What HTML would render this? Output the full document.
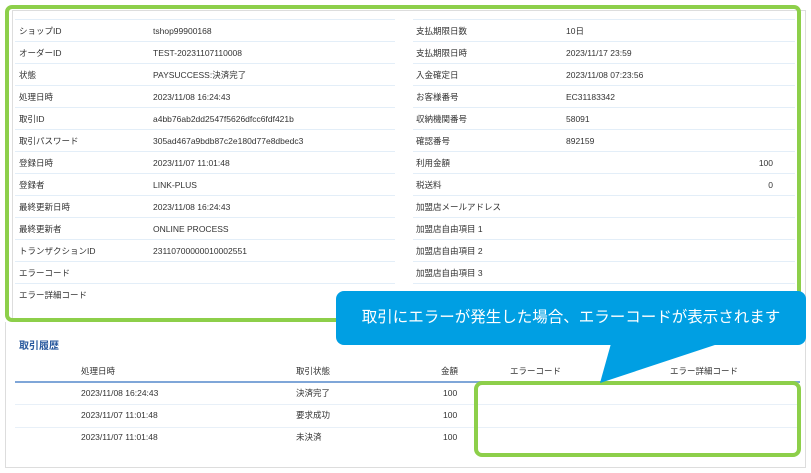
<!DOCTYPE html>
<html><head><meta charset="utf-8"><style>
*{margin:0;padding:0;box-sizing:border-box}
body{width:811px;height:473px;background:#fff;position:relative;overflow:hidden;font-family:"Liberation Sans","Noto Sans CJK JP",sans-serif;font-size:8.5px;line-height:12px;color:#333}
.a{position:absolute;white-space:nowrap}
.l{position:absolute;height:1px;background:#e3eef8}
</style></head><body>
<div class="a" style="left:12px;top:10px;width:794px;height:312px;border:1px solid #ddd;border-bottom:none"></div>
<div class="a" style="left:5px;top:322px;width:801px;height:146px;border:1px solid #ddd;border-top:none"></div>
<div class="l" style="left:15px;top:19px;width:380px"></div>
<div class="l" style="left:413px;top:19px;width:382px"></div>
<div id="rows"></div>
<script>
var L=[["ショップID","tshop99900168"],["オーダーID","TEST-20231107110008"],["状態","PAYSUCCESS:決済完了"],["処理日時","2023/11/08 16:24:43"],["取引ID","a4bb76ab2dd2547f5626dfcc6fdf421b"],["取引パスワード","305ad467a9bdb87c2e180d77e8dbedc3"],["登録日時","2023/11/07 11:01:48"],["登録者","LINK-PLUS"],["最終更新日時","2023/11/08 16:24:43"],["最終更新者","ONLINE PROCESS"],["トランザクションID","23110700000010002551"],["エラーコード",""],["エラー詳細コード",""]];
var R=[["支払期限日数","10日"],["支払期限日時","2023/11/17 23:59"],["入金確定日","2023/11/08 07:23:56"],["お客様番号","EC31183342"],["収納機関番号","58091"],["確認番号","892159"],["利用金額","",  "100"],["税送料","","0"],["加盟店メールアドレス",""],["加盟店自由項目 1",""],["加盟店自由項目 2",""],["加盟店自由項目 3",""]];
var h="";
L.forEach(function(r,i){var y=25+i*22;h+='<div class="a" style="left:19px;top:'+y+'px">'+r[0]+'</div><div class="a" style="left:153px;top:'+y+'px">'+r[1]+'</div>';if(i<12)h+='<div class="l" style="left:15px;top:'+(41+i*22)+'px;width:380px"></div>';});
R.forEach(function(r,i){var y=25+i*22;h+='<div class="a" style="left:416px;top:'+y+'px">'+r[0]+'</div><div class="a" style="left:566px;top:'+y+'px">'+r[1]+'</div>';if(r[2])h+='<div class="a" style="right:38px;top:'+y+'px">'+r[2]+'</div>';h+='<div class="l" style="left:413px;top:'+(41+i*22)+'px;width:382px"></div>';});
document.getElementById("rows").innerHTML=h;
</script>
<div class="a" style="left:5px;top:5px;width:796px;height:317px;border:4px solid #8dcf4a;border-radius:7px"></div>
<div class="a" style="left:19px;top:341px;font-size:10px;font-weight:bold;color:#2a5a9e">取引履歴</div>
<div class="a" style="left:81px;top:365px">処理日時</div>
<div class="a" style="left:296px;top:365px">取引状態</div>
<div class="a" style="left:441px;top:365px">金額</div>
<div class="a" style="left:510px;top:365px">エラーコード</div>
<div class="a" style="left:670px;top:365px">エラー詳細コード</div>
<div class="a" style="left:15px;top:381px;width:785px;height:2px;background:#7fa6d8"></div>
<div class="a" style="left:81px;top:387px">2023/11/08 16:24:43</div><div class="a" style="left:296px;top:387px">決済完了</div><div class="a" style="left:443px;top:387px">100</div>
<div class="l" style="left:15px;top:404px;width:785px;background:#e8f0f8"></div>
<div class="a" style="left:81px;top:409px">2023/11/07 11:01:48</div><div class="a" style="left:296px;top:409px">要求成功</div><div class="a" style="left:443px;top:409px">100</div>
<div class="l" style="left:15px;top:427px;width:785px;background:#e8f0f8"></div>
<div class="a" style="left:81px;top:431px">2023/11/07 11:01:48</div><div class="a" style="left:296px;top:431px">未決済</div><div class="a" style="left:443px;top:431px">100</div>
<div class="a" style="left:474px;top:381px;width:327px;height:76px;border:4px solid #8dcf4a;border-radius:8px"></div>
<svg class="a" style="left:0;top:0" width="811" height="473"><polygon points="612,340 600,383 730,340" fill="#009fe3"/></svg>
<div class="a" style="left:336px;top:291px;width:470px;height:54px;background:#009fe3;border-radius:8px;color:#fff;font-size:15.5px;line-height:54px;text-align:center">取引にエラーが発生した場合、エラーコードが表示されます</div>
</body></html>
